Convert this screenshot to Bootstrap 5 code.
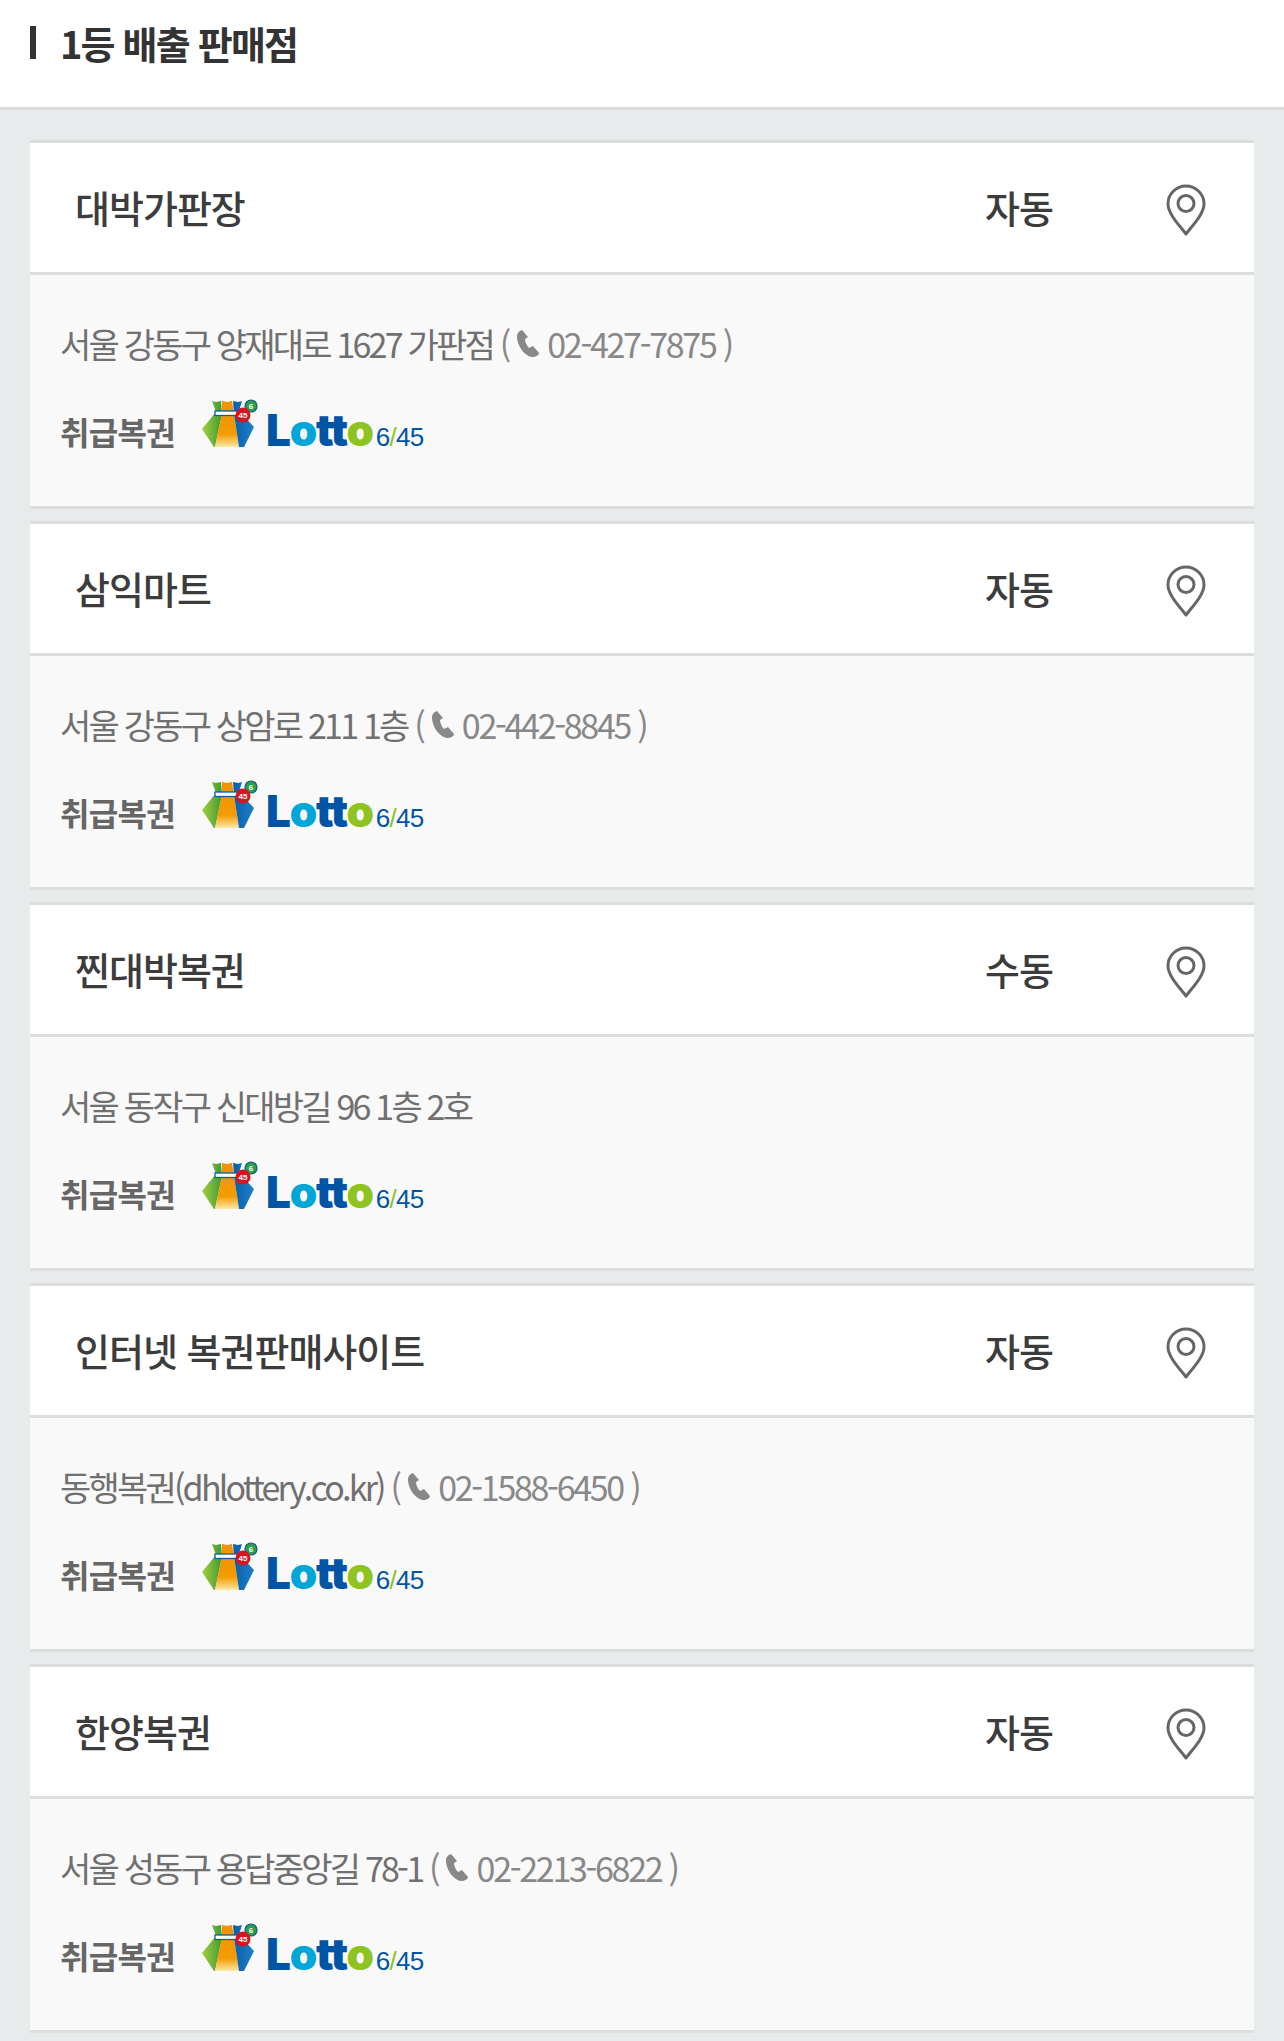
<!DOCTYPE html>
<html lang="ko">
<head>
  <meta charset="UTF-8" />
  <meta name="viewport" content="width=device-width, initial-scale=1.0"/>
  <title>1등 배출 판매점</title>
  <link href="https://cdn.jsdelivr.net/npm/bootstrap@5.3.2/dist/css/bootstrap.min.css" rel="stylesheet">
  <style>
    body {
      background-color: #e8ebec;
      font-family: "Noto Sans CJK KR", "Noto Sans", sans-serif;
      color: #333;
    }
    .page-head {
      height: 110px;
      padding: 26px 30px 0;
      background: #fff;
      border-bottom: 3px solid #ddd;
    }
    .page-head h1 {
      margin: 0;
      padding-left: 24px;
      font-size: 38px;
      font-weight: 700;
      letter-spacing: -1.8px;
      color: #333;
      line-height: 34px;
    }
    .head-bar {
      width: 6px;
      height: 33px;
      background: #333;
    }
    .shop-list {
      padding: 30px 30px 0;
    }
    .shop {
      margin-bottom: 12px;
      border-top: 3px solid #ddd;
      border-bottom: 3px solid #ddd;
      background: #f9f9f9;
    }
    .shop-top {
      height: 132px;
      padding: 0 48px 0 45px;
      background: #fff;
      border-bottom: 3px solid #ddd;
    }
    .shop-name, .shop-type {
      font-size: 38px;
      font-weight: 500;
      letter-spacing: -1px;
      line-height: 1;
      padding-bottom: 2px;
      color: #3c3c3c;
    }
    .shop-type {
      width: 181px;
    }
    .pin-icon {
      width: 40px;
      height: 52px;
      margin-top: 5px;
    }
    .shop-body {
      height: 231px;
      padding: 49px 30px 0;
    }
    .shop-addr {
      font-size: 34px;
      letter-spacing: -2.8px;
      line-height: 40px;
      font-weight: 400;
      color: #707070;
    }
    .shop-addr .tel {
      color: #888;
      letter-spacing: -2.3px;
    }
    .tel-icon {
      width: 24px;
      height: 30px;
      vertical-align: -1px;
    }
    .shop-kind {
      margin-top: 29px;
      height: 60px;
    }
    .kind-label {
      width: 139px;
      padding-top: 16px;
      font-size: 32px;
      font-weight: 700;
      letter-spacing: -0.7px;
      color: #666;
    }
    .bag-icon {
      width: 60px;
      height: 52px;
    }
    .lotto-text {
      margin: 0 0 -3px 7px;
      line-height: 1;
    }
    .lotto-word {
      font-family: Inter, sans-serif;
      font-weight: 900;
      font-size: 44px;
      letter-spacing: -1.2px;
    }
    .lotto-num {
      margin-left: 3px;
      font-family: "Liberation Sans", sans-serif;
      font-size: 26px;
      letter-spacing: -0.7px;
    }
    .tone-blue { color: #0054a6; }
    .tone-cyan { color: #00a6d8; }
    .tone-lime { color: #8fc31f; }
    .ball-num {
      font-family: "Liberation Sans", sans-serif;
      font-size: 8px;
      font-weight: 700;
      fill: #fff;
      text-anchor: middle;
    }
  </style>
</head>
<body>
  <svg width="0" height="0" class="position-absolute">
    <defs>
      <linearGradient id="bag-green" x1="0" y1="0" x2="1" y2="0">
        <stop offset="0" stop-color="#a5cf3c"/>
        <stop offset="1" stop-color="#3f9a35"/>
      </linearGradient>
      <linearGradient id="bag-orange" x1="0" y1="0" x2="0" y2="1">
        <stop offset="0" stop-color="#f29100"/>
        <stop offset="0.72" stop-color="#f39c00"/>
        <stop offset="1" stop-color="#fde9a8"/>
      </linearGradient>
      <linearGradient id="bag-blue" x1="0" y1="0" x2="1" y2="0">
        <stop offset="0" stop-color="#0c5ea8"/>
        <stop offset="1" stop-color="#1a80c8"/>
      </linearGradient>
    </defs>
    <symbol id="pin" viewBox="0 0 40 52">
      <path d="M20 50 C14 42 2 30 2 20 a18 18 0 0 1 36 0 C38 30 26 42 20 50 Z" fill="none" stroke="#666" stroke-width="3" stroke-linejoin="round"/>
      <circle cx="20" cy="19.5" r="8" fill="none" stroke="#666" stroke-width="3"/>
    </symbol>
    <symbol id="tel" viewBox="0 0 24 30">
      <path d="M6 1 C3 2 1 4 1 8 C1 16 8 27 16 28 C20 28 23 26 23 24 L17 17 L13 19 C11 17 9 13 9 10 L12 8 Z" fill="#888"/>
    </symbol>
  </svg>

  <template id="lotto-logo">
    <svg class="bag-icon" viewBox="0 0 60 52">
      <path d="M13 4 L17 5 L22 4 L23 17 L16 50 L15 50 L3 32 L17 15 Z" fill="url(#bag-green)"/>
      <path d="M23 4 L28 5 L33 4 L35 17 L40 50 L16 50 L23 17 Z" fill="url(#bag-orange)"/>
      <path d="M34 4 L39 5 L43 4 L40 14 L55 30 L45 50 L40 50 L35 17 Z" fill="url(#bag-blue)"/>
      <rect x="16" y="14" width="25" height="4.5" fill="#fff" stroke="#0a5ea8" stroke-width="1.3"/>
      <circle cx="52" cy="9" r="6" fill="#2d9f45" stroke="#0b5a86" stroke-width="1.2"/>
      <text class="ball-num" x="52" y="12">6</text>
      <circle cx="44" cy="18" r="7.5" fill="#d8141f"/>
      <text class="ball-num" x="44" y="21">45</text>
    </svg>
    <div class="lotto-text d-flex align-items-baseline">
      <span class="lotto-word"><span class="tone-blue">L</span><span class="tone-cyan">o</span><span class="tone-blue">tt</span><span class="tone-lime">o</span></span>
      <span class="lotto-num"><span class="tone-blue">6</span><span class="tone-lime">/</span><span class="tone-blue">45</span></span>
    </div>
  </template>

  <header class="page-head d-flex align-items-start">
    <span class="head-bar"></span>
    <h1>1등 배출 판매점</h1>
  </header>

  <main class="shop-list">
    <section class="shop">
      <div class="shop-top d-flex align-items-center">
        <div class="shop-name flex-grow-1">대박가판장</div>
        <div class="shop-type">자동</div>
        <svg class="pin-icon"><use href="#pin"/></svg>
      </div>
      <div class="shop-body">
        <div class="shop-addr">서울 강동구 양재대로 1627 가판점 <span class="tel">( <svg class="tel-icon"><use href="#tel"/></svg> 02-427-7875 )</span></div>
        <div class="shop-kind d-flex align-items-center">
          <span class="kind-label">취급복권</span>
          <div class="lotto-slot d-flex align-items-end"></div>
        </div>
      </div>
    </section>

    <section class="shop">
      <div class="shop-top d-flex align-items-center">
        <div class="shop-name flex-grow-1">삼익마트</div>
        <div class="shop-type">자동</div>
        <svg class="pin-icon"><use href="#pin"/></svg>
      </div>
      <div class="shop-body">
        <div class="shop-addr">서울 강동구 상암로 211 1층 <span class="tel">( <svg class="tel-icon"><use href="#tel"/></svg> 02-442-8845 )</span></div>
        <div class="shop-kind d-flex align-items-center">
          <span class="kind-label">취급복권</span>
          <div class="lotto-slot d-flex align-items-end"></div>
        </div>
      </div>
    </section>

    <section class="shop">
      <div class="shop-top d-flex align-items-center">
        <div class="shop-name flex-grow-1">찐대박복권</div>
        <div class="shop-type">수동</div>
        <svg class="pin-icon"><use href="#pin"/></svg>
      </div>
      <div class="shop-body">
        <div class="shop-addr">서울 동작구 신대방길 96 1층 2호</div>
        <div class="shop-kind d-flex align-items-center">
          <span class="kind-label">취급복권</span>
          <div class="lotto-slot d-flex align-items-end"></div>
        </div>
      </div>
    </section>

    <section class="shop">
      <div class="shop-top d-flex align-items-center">
        <div class="shop-name flex-grow-1">인터넷 복권판매사이트</div>
        <div class="shop-type">자동</div>
        <svg class="pin-icon"><use href="#pin"/></svg>
      </div>
      <div class="shop-body">
        <div class="shop-addr">동행복권(dhlottery.co.kr) <span class="tel">( <svg class="tel-icon"><use href="#tel"/></svg> 02-1588-6450 )</span></div>
        <div class="shop-kind d-flex align-items-center">
          <span class="kind-label">취급복권</span>
          <div class="lotto-slot d-flex align-items-end"></div>
        </div>
      </div>
    </section>

    <section class="shop">
      <div class="shop-top d-flex align-items-center">
        <div class="shop-name flex-grow-1">한양복권</div>
        <div class="shop-type">자동</div>
        <svg class="pin-icon"><use href="#pin"/></svg>
      </div>
      <div class="shop-body">
        <div class="shop-addr">서울 성동구 용답중앙길 78-1 <span class="tel">( <svg class="tel-icon"><use href="#tel"/></svg> 02-2213-6822 )</span></div>
        <div class="shop-kind d-flex align-items-center">
          <span class="kind-label">취급복권</span>
          <div class="lotto-slot d-flex align-items-end"></div>
        </div>
      </div>
    </section>
  </main>

  <script src="https://cdn.jsdelivr.net/npm/bootstrap@5.3.2/dist/js/bootstrap.bundle.min.js"></script>
  <script>
    const logo = document.getElementById("lotto-logo");
    document.querySelectorAll(".lotto-slot").forEach(slot => {
      slot.appendChild(logo.content.cloneNode(true));
    });
  </script>
</body>
</html>
